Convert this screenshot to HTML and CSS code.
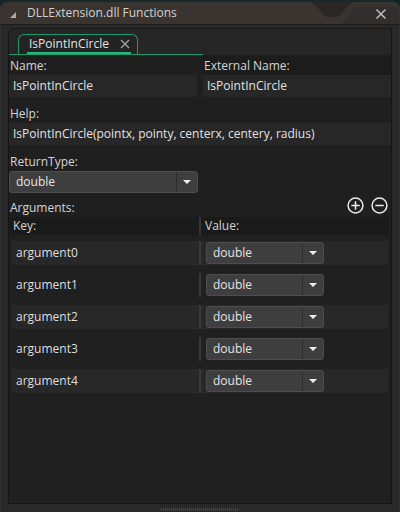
FILE: index.html
```html
<!DOCTYPE html>
<html>
<head>
<meta charset="utf-8">
<link rel="stylesheet" href="styles.css">
</head>
<body>
<div class="window">
  <div class="titlebar">
    <svg class="title-deco" width="400" height="22" viewBox="0 0 400 22">
      <path d="M312 0 L326 15 L338 15 L352 0 Z" fill="#2b2725"/>
      <path d="M342 22 L355 5 L392 5 Q399 5 399 12 L400 22 Z" fill="#312f2e"/>
    </svg>
    <span class="collapse"></span>
    <span class="title">DLLExtension.dll Functions</span>
    <svg class="close" width="12" height="12" viewBox="0 0 12 12"><path d="M1.5 1.5 L10.5 10.5 M10.5 1.5 L1.5 10.5" stroke="#b9bdc1" stroke-width="1.5"/></svg>
  </div>
  <div class="frame">
    <div class="panel">
      <div class="tabstrip">
        <div class="tab">
          <div class="tab-inner">
            <span class="tab-label">IsPointInCircle</span>
            <svg class="tab-close" width="10" height="10" viewBox="0 0 10 10"><path d="M1 1 L9 9 M9 1 L1 9" stroke="#a3a3a3" stroke-width="1.3"/></svg>
          </div>
        </div>
      </div>
      <div class="content">
        <div class="cols">
          <div class="field">
            <div class="label first">Name:</div>
            <div class="input">IsPointInCircle</div>
          </div>
          <div class="field right">
            <div class="label first">External Name:</div>
            <div class="input">IsPointInCircle</div>
          </div>
        </div>
        <div class="label">Help:</div>
        <div class="input">IsPointInCircle(pointx, pointy, centerx, centery, radius)</div>
        <div class="label">ReturnType:</div>
        <div class="dropdown wide"><span class="dd-text">double</span><span class="dd-btn"><span class="arrow"></span></span></div>
        <div class="args-head">
          <span class="label-inline">Arguments:</span>
          <span class="icons">
            <svg width="17" height="17" viewBox="0 0 17 17"><circle cx="8.5" cy="8.5" r="7.4" fill="none" stroke="#ececec" stroke-width="1.5"/><path d="M4.3 8.5 H12.7 M8.5 4.3 V12.7" stroke="#ececec" stroke-width="1.6"/></svg>
            <svg width="17" height="17" viewBox="0 0 17 17"><circle cx="8.5" cy="8.5" r="7.4" fill="none" stroke="#ececec" stroke-width="1.5"/><path d="M4.3 8.5 H12.7" stroke="#ececec" stroke-width="1.6"/></svg>
          </span>
        </div>
        <div class="table">
          <div class="thead">
            <span class="th key">Key:</span>
            <span class="sep"></span>
            <span class="th">Value:</span>
          </div>
          <div class="rows">
            <div class="trow shaded"><span class="key">argument0</span><span class="sep"></span><div class="dropdown"><span class="dd-text">double</span><span class="dd-btn"><span class="arrow"></span></span></div></div>
            <div class="trow"><span class="key">argument1</span><span class="sep"></span><div class="dropdown"><span class="dd-text">double</span><span class="dd-btn"><span class="arrow"></span></span></div></div>
            <div class="trow shaded"><span class="key">argument2</span><span class="sep"></span><div class="dropdown"><span class="dd-text">double</span><span class="dd-btn"><span class="arrow"></span></span></div></div>
            <div class="trow"><span class="key">argument3</span><span class="sep"></span><div class="dropdown"><span class="dd-text">double</span><span class="dd-btn"><span class="arrow"></span></span></div></div>
            <div class="trow shaded"><span class="key">argument4</span><span class="sep"></span><div class="dropdown"><span class="dd-text">double</span><span class="dd-btn"><span class="arrow"></span></span></div></div>
          </div>
        </div>
      </div>
    </div>
    <div class="footer"><span class="grip"></span></div>
  </div>
</div>
</body>
</html>
```
FILE: styles.css
```css
* { box-sizing: border-box; }
html, body { margin: 0; padding: 0; }
body {
  background: #0f2526;
  font-family: "Open Sans", "Noto Sans", sans-serif;
  font-size: 12px;
  color: #d6d6d6;
  width: 400px;
  height: 512px;
  overflow: hidden;
}
.window {
  width: 400px;
  height: 512px;
  display: flex;
  flex-direction: column;
  background: #292929;
  border-radius: 8px 8px 0 0;
  border-top: 2px solid #142a2a;
  overflow: hidden;
}
.titlebar {
  position: relative;
  flex: none;
  height: 23px;
  display: flex;
  align-items: center;
  padding: 0 0 0 10px;
  background: #3a3430;
  border-bottom: 1px solid #1d1d1d;
}
.title-deco {
  position: absolute;
  left: 0;
  top: 0;
}
.collapse {
  position: relative;
  width: 0;
  height: 0;
  border-style: solid;
  border-width: 0 0 6px 6px;
  border-color: transparent transparent #a9a9a9 transparent;
  margin-top: 3px;
  margin-right: 11px;
}
.title {
  position: relative;
  color: #d2d2d2;
  font-size: 12px;
  line-height: 22px;
}
.close {
  position: relative;
  margin-left: auto;
  margin-right: 13px;
  margin-top: 1px;
}
.frame {
  flex: 1;
  display: flex;
  flex-direction: column;
  padding: 3px 7px 0 7px;
  border-left: 1px solid #333;
  border-right: 1px solid #333;
}
.panel {
  flex: 1;
  display: flex;
  flex-direction: column;
  border: 1px solid #151515;
  border-radius: 6px 0 0 0;
  background: #1f1f1f;
  overflow: hidden;
}
.tabstrip {
  flex: none;
  height: 26px;
  display: flex;
  align-items: flex-end;
  padding-left: 9px;
  background: linear-gradient(#1c9a6b, #1c9a6b) no-repeat left bottom / 194px 1px, #262626;
}
.tab {
  width: 120px;
  height: 20px;
  margin-bottom: 1px;
  border: 1px solid #1c9a6b;
  border-bottom: none;
  border-radius: 6px 6px 0 0;
  background: #232323;
  padding: 0 6px 0 8px;
}
.tab-inner {
  height: 100%;
  display: flex;
  align-items: center;
  border-bottom: 2px solid #22b57c;
  padding-left: 2px;
}
.tab-label {
  color: #e4e4e4;
  line-height: 17px;
}
.tab-close {
  margin-left: auto;
  margin-right: 1px;
}
.content {
  flex: 1;
  display: flex;
  flex-direction: column;
  padding-top: 1px;
}
.cols {
  display: grid;
  grid-template-columns: 188px 188px;
  column-gap: 6px;
}
.field.right { background: #1c1c1c; }
.label {
  height: 18px;
  line-height: 18px;
  margin-top: 8px;
  padding-left: 1px;
  color: #d4d4d4;
}
.label.first { margin-top: 1px; }
.input {
  height: 22px;
  line-height: 22px;
  padding-left: 4px;
  background: #272727;
  color: #e2e2e2;
}
.dropdown {
  display: flex;
  height: 22px;
  width: 118px;
  background: #3e3e3e;
  border: 1px solid #4d4d4d;
  border-radius: 3px;
  color: #e4e4e4;
}
.dropdown.wide { width: 189px; }
.dd-text {
  flex: 1;
  line-height: 20px;
  padding-left: 6px;
}
.dd-btn {
  width: 21px;
  border-left: 1px solid #2d2d2d;
  display: flex;
  align-items: center;
  justify-content: center;
}
.arrow {
  width: 0;
  height: 0;
  border-style: solid;
  border-width: 4px 4px 0 4px;
  border-color: #eeeeee transparent transparent transparent;
}
.args-head {
  display: flex;
  align-items: center;
  height: 18px;
  margin-top: 6px;
  padding-left: 1px;
  padding-right: 3px;
}
.label-inline { color: #d4d4d4; line-height: 18px; }
.icons {
  margin-left: auto;
  display: flex;
  gap: 7px;
  margin-top: -6px;
}
.table {
  flex: 1;
  margin-right: 2px;
  display: flex;
  flex-direction: column;
  background: #202020;
}
.thead {
  display: flex;
  height: 18px;
  align-items: stretch;
  background: #1a1a1a;
  color: #d4d4d4;
  line-height: 18px;
}
.thead .key { width: 190px; padding-left: 4px; }
.th { display: block; }
.sep {
  width: 2px;
  background: #363636;
  flex: none;
}
.thead .th:last-child { padding-left: 4px; }
.rows {
  display: flex;
  flex-direction: column;
  gap: 8px;
  padding: 6px 1px 0 3px;
}
.trow {
  height: 24px;
  display: flex;
  align-items: center;
}
.trow.shaded { background: #282828; }
.trow .key {
  width: 187px;
  padding-left: 4px;
  color: #dedede;
  line-height: 24px;
}
.trow .sep { height: 24px; background: #3a3a3a; }
.trow .dropdown { margin-left: 5px; }
.footer {
  flex: none;
  height: 8px;
  display: flex;
  justify-content: center;
}
.grip {
  margin-top: 4px;
  width: 78px;
  height: 3px;
  background-image: repeating-linear-gradient(90deg, #444 0 1px, transparent 1px 2px);
}
```
